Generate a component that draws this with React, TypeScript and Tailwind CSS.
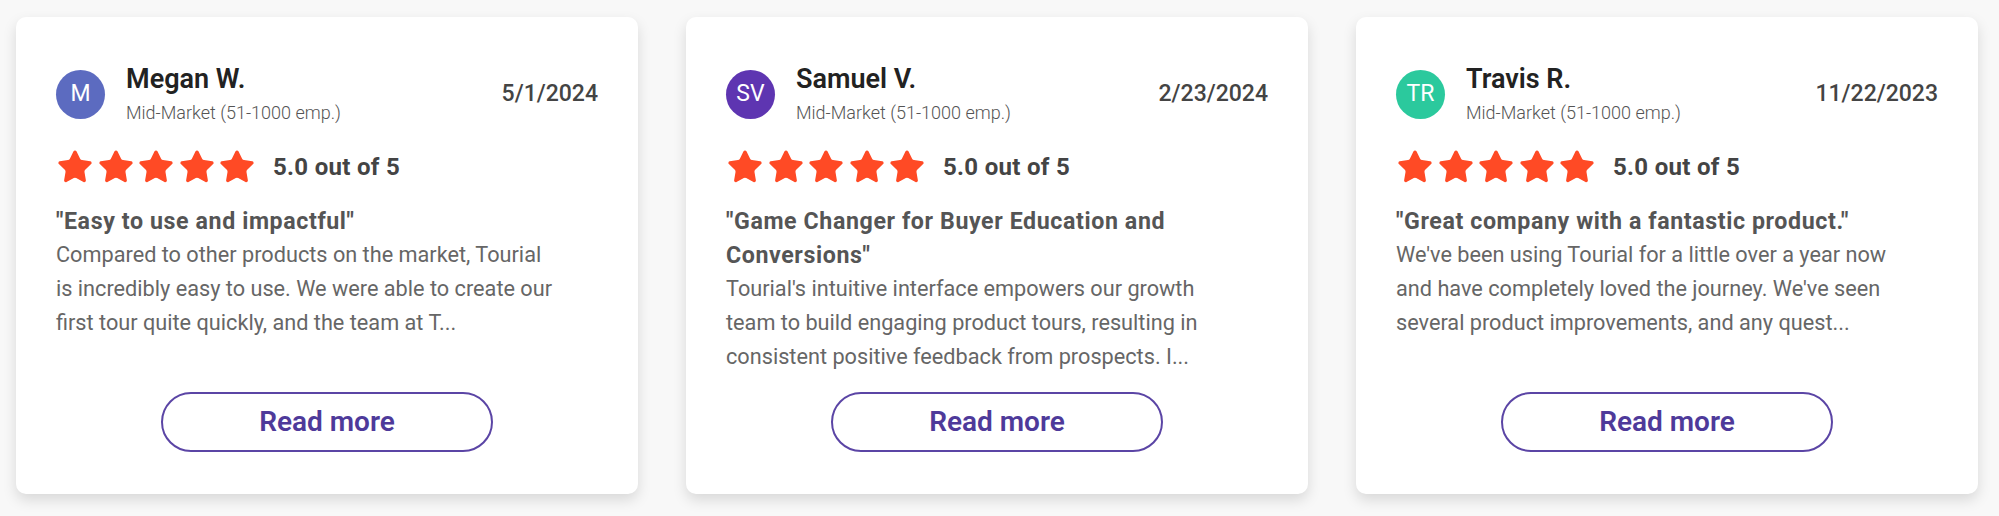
import { Star } from 'lucide-react';

type Review = {
  initials: string;
  avatar: string;
  name: string;
  segment: string;
  date: string;
  title: string[];
  body: string[];
};

const reviews: Review[] = [
  {
    initials: 'M',
    avatar: 'bg-[#5c6bc0]',
    name: 'Megan W.',
    segment: 'Mid-Market (51-1000 emp.)',
    date: '5/1/2024',
    title: ['"Easy to use and impactful"'],
    body: [
      'Compared to other products on the market, Tourial',
      'is incredibly easy to use. We were able to create our',
      'first tour quite quickly, and the team at T...',
    ],
  },
  {
    initials: 'SV',
    avatar: 'bg-[#5e35b1]',
    name: 'Samuel V.',
    segment: 'Mid-Market (51-1000 emp.)',
    date: '2/23/2024',
    title: ['"Game Changer for Buyer Education and', 'Conversions"'],
    body: [
      "Tourial's intuitive interface empowers our growth",
      'team to build engaging product tours, resulting in',
      'consistent positive feedback from prospects. I...',
    ],
  },
  {
    initials: 'TR',
    avatar: 'bg-[#2bc99d]',
    name: 'Travis R.',
    segment: 'Mid-Market (51-1000 emp.)',
    date: '11/22/2023',
    title: ['"Great company with a fantastic product."'],
    body: [
      "We've been using Tourial for a little over a year now",
      "and have completely loved the journey. We've seen",
      'several product improvements, and any quest...',
    ],
  },
];

function ReviewCard({ review }: { review: Review }) {
  return (
    <div className="flex flex-col rounded-[10px] bg-white px-[40px] pt-[46px] pb-[42px] shadow-[0_6px_14px_rgba(0,0,0,0.13)]">
      {/* Header */}
      <div className="flex items-center justify-between">
        <div className="flex items-center gap-[21px]">
          <div
            className={`flex h-[49px] w-[49px] items-center justify-center rounded-full text-[23px] text-white ${review.avatar}`}
          >
            {review.initials}
          </div>
          <div>
            <div className="text-[27px] leading-[32px] font-semibold text-[#222]">{review.name}</div>
            <div className="mt-[6px] text-[18px] leading-[24px] font-light text-[#555]">{review.segment}</div>
          </div>
        </div>
        <div className="text-[23px] font-medium text-[#444]">{review.date}</div>
      </div>

      {/* Rating */}
      <div className="mt-[23px] flex items-center">
        <div className="flex gap-[2.5px]">
          {[0, 1, 2, 3, 4].map((i) => (
            <Star key={i} className="h-[38px] w-[38px] fill-[#ff4a25] text-[#ff4a25]" strokeWidth={1} />
          ))}
        </div>
        <span className="ml-[17px] text-[24px] font-bold tracking-[0.3px] text-[#444]">5.0 out of 5</span>
      </div>

      {/* Review text */}
      <div className="mt-[18px] leading-[34px]">
        {review.title.map((line) => (
          <div key={line} className="text-[23.2px] font-bold tracking-[0.6px] whitespace-nowrap text-[#555]">
            {line}
          </div>
        ))}
        {review.body.map((line) => (
          <div key={line} className="text-[21.7px] whitespace-nowrap text-[#666]">
            {line}
          </div>
        ))}
      </div>

      <div className="min-h-[18px] flex-1" />
      <button className="mx-auto h-[60px] w-[332px] rounded-full border-2 border-[#5b45a5] text-[28px] font-semibold text-[#4e3a9a]">
        Read more
      </button>
    </div>
  );
}

export default function App() {
  return (
    <div className="min-h-[516px] bg-[#f8f8f8] pt-[17px] pl-[16px] font-['Roboto',sans-serif]">
      <div className="grid grid-cols-[repeat(3,622px)] gap-[48px]">
        {reviews.map((r) => (
          <ReviewCard key={r.name} review={r} />
        ))}
      </div>
    </div>
  );
}
